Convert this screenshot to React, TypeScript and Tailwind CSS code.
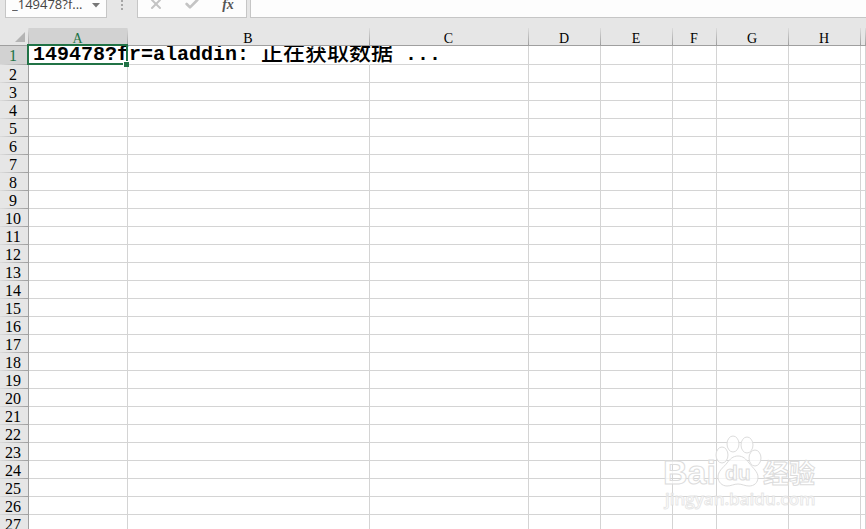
import { Check, X } from 'lucide-react';

const columns = [
  { name: 'A', width: 'w-[99px]' },
  { name: 'B', width: 'w-[242px]' },
  { name: 'C', width: 'w-[159px]' },
  { name: 'D', width: 'w-[72px]' },
  { name: 'E', width: 'w-[72px]' },
  { name: 'F', width: 'w-[44px]' },
  { name: 'G', width: 'w-[72px]' },
  { name: 'H', width: 'w-[72px]' },
  { name: '', width: 'w-auto' },
];

const rows = Array.from({ length: 40 }, (_, i) => i + 1);

function FormulaBar() {
  return (
    <div className="flex h-7 items-start">
      <div className="ml-[5px] flex h-[18px] w-[102px] shrink-0 border border-t-0 border-[#c6c6c6] bg-[#fdfdfd]">
        <input
          aria-label="Name box"
          defaultValue="_149478?f..."
          className="-mt-1 h-5 min-w-0 flex-1 bg-transparent pb-1 pl-1.5 font-['Open_Sans','Noto_Sans',sans-serif] text-[13px] leading-4 text-[#444] outline-none"
        />
        <button aria-label="Show names" className="flex h-2 w-5 items-end justify-center">
          <svg width="8" height="5" viewBox="0 0 8 5" fill="#777">
            <path d="M0 0h8L4 4.5z" />
          </svg>
        </button>
      </div>
      <svg className="mx-3.5 shrink-0" width="2" height="10" viewBox="0 0 2 10" fill="#a6a6a6">
        <path d="M0 0h2v2H0zM0 4h2v2H0zM0 8h2v2H0z" />
      </svg>
      <div className="flex h-[18px] w-[110px] shrink-0 border border-t-0 border-[#c6c6c6] bg-[#fdfdfd]">
        <button aria-label="Cancel" className="flex h-3 flex-1 items-end justify-center text-[#c4c4c4]">
          <X className="h-4 w-4 shrink-0" strokeWidth={3} />
        </button>
        <button aria-label="Enter" className="flex h-3 flex-1 items-end justify-center text-[#c4c4c4]">
          <Check className="h-4 w-4 shrink-0" strokeWidth={4} />
        </button>
        <button
          aria-label="Insert function"
          className="h-2.5 flex-1 font-['Liberation_Serif',serif] text-sm leading-[8px] font-bold text-[#555] italic"
        >
          fx
        </button>
      </div>
      <input
        aria-label="Formula bar"
        className="ml-[3px] h-[18px] min-w-0 flex-1 border-b border-l border-[#c6c6c6] bg-[#fdfdfd] px-2 text-sm outline-none"
      />
    </div>
  );
}

function SelectedCell() {
  return (
    <>
      {/* the entry is taller than its row, so the row cuts off the top */}
      <div className="flex h-[18px] items-end overflow-y-clip pl-1 font-['Liberation_Mono','Noto_Sans_CJK_SC',monospace] text-xl leading-[18px] font-bold whitespace-pre text-black">
        <span>149478?fr=aladdin: </span>
        <span className="pb-1 font-['Noto_Sans_CJK_SC',sans-serif] text-[22px] leading-5 font-medium">
          正在获取数据
        </span>
        <span> ...</span>
      </div>
      <div className="pointer-events-none absolute -top-0.5 -right-px -bottom-px -left-0.5 border-2 border-[#217346]" />
      <div className="absolute -right-0.5 -bottom-[3px] h-1.5 w-1.5 border-t border-l border-white bg-[#217346]" />
    </>
  );
}

function Sheet() {
  return (
    <table className="w-full table-fixed border-separate border-spacing-0 font-['Liberation_Serif',serif] font-normal">
      <colgroup>
        <col className="w-[29px]" />
        {columns.map((c, i) => (
          <col key={i} className={c.width} />
        ))}
      </colgroup>
      <thead>
        <tr className="h-[18px]">
          <th
            aria-label="Select all"
            className="border-b border-[#9f9f9f] bg-[linear-gradient(#dcdcdc,#9f9f9f)] bg-[length:1px_100%] bg-right bg-no-repeat p-0"
          >
            <svg className="ml-[15px]" width="10" height="10" viewBox="0 0 10 10" fill="#b4b4b4">
              <path d="M10 0v10H0z" />
            </svg>
          </th>
          {columns.map((c, i) => (
            <th
              key={i}
              scope="col"
              className={`border-b border-[#9f9f9f] bg-[linear-gradient(#dcdcdc,#9f9f9f)] bg-[length:1px_100%] bg-right bg-no-repeat p-0 pt-1 pr-0.5 text-sm leading-[13px] font-normal ${
                c.name === 'A' ? 'bg-[#d2d2d2] text-[#217346]' : 'text-black'
              }`}
            >
              {c.name}
            </th>
          ))}
        </tr>
      </thead>
      <tbody>
        {rows.map((row) => (
          <tr key={row} className={row === 1 ? 'h-[19px]' : 'h-[18px]'}>
            <th
              scope="row"
              className={`border-r border-[#9f9f9f] bg-[linear-gradient(to_right,#dcdcdc,#9f9f9f)] bg-[length:100%_1px] bg-bottom bg-no-repeat p-0 pt-px pr-0.5 text-base leading-4 font-normal ${
                row === 1 ? 'bg-[#d2d2d2] text-[#217346]' : 'text-black'
              }`}
            >
              {row}
            </th>
            {columns.map((c, i) => {
              const spilled = row === 1 && i < 2;
              return (
                <td
                  key={i}
                  className={`border-r border-b border-b-[#d4d4d4] p-0 ${
                    spilled ? 'border-r-white' : 'border-r-[#d4d4d4]'
                  } ${row === 1 && i === 0 ? 'relative' : ''} bg-white`}
                >
                  {row === 1 && i === 0 && <SelectedCell />}
                </td>
              );
            })}
          </tr>
        ))}
      </tbody>
    </table>
  );
}

function Watermark() {
  return (
    <svg
      className="pointer-events-none absolute right-11 bottom-4"
      width="160"
      height="80"
      viewBox="0 0 160 80"
      fill="#fff"
      fillOpacity="0.75"
      stroke="#dcdcdc"
      strokeWidth="1"
      aria-hidden="true"
    >
      <g fontFamily="'Liberation Sans', sans-serif" fontWeight="700">
        <text x="1" y="51" fontSize="34">
          Bai
        </text>
        <ellipse cx="60" cy="22" rx="6" ry="8" />
        <ellipse cx="71" cy="11" rx="6" ry="8" />
        <ellipse cx="85" cy="12" rx="6" ry="8" />
        <ellipse cx="93" cy="25" rx="6" ry="8" />
        <path d="M76 23c5 0 8 3 11 7 4 5 9 9 9 14 0 6-4 9-9 9-4 0-7-2-11-2s-7 2-11 2c-5 0-9-4-9-9 0-6 5-9 9-14 3-4 6-7 11-7z" />
        <text x="63" y="47" fontSize="21">
          du
        </text>
        <text x="101" y="50" fontSize="26" fontFamily="'Noto Sans CJK SC', sans-serif">
          经验
        </text>
      </g>
      <text x="3" y="72" fontSize="17" fontFamily="'Open Sans', sans-serif" fontWeight="600" strokeOpacity="0.7">
        jingyan.baidu.com
      </text>
    </svg>
  );
}

export default function App() {
  return (
    <div className="relative h-screen overflow-hidden bg-[#e6e6e6]">
      <FormulaBar />
      <Sheet />
      <Watermark />
    </div>
  );
}
